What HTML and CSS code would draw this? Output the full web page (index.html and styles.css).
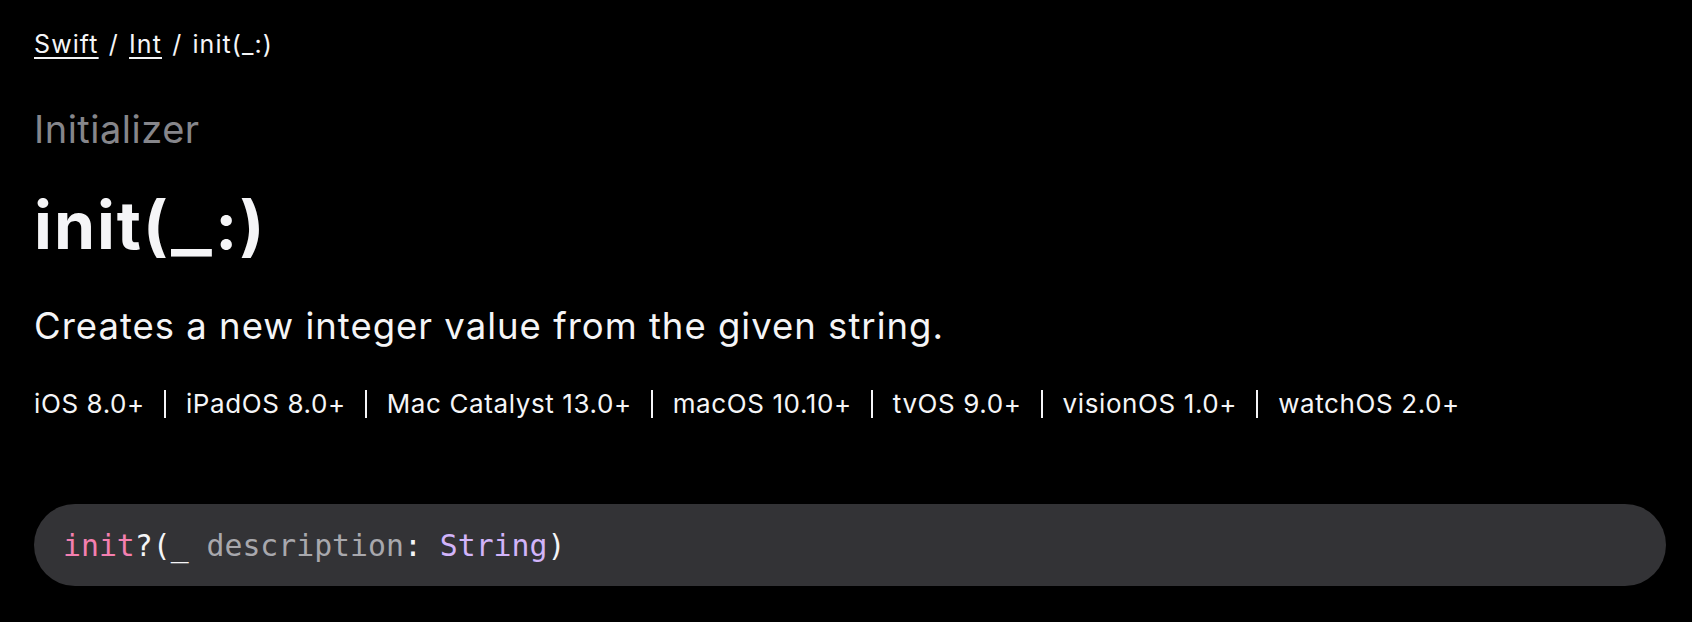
FILE: index.html
```html
<!DOCTYPE html>
<html lang="en">
<head>
<meta charset="utf-8">
<title>init(_:) | Apple Developer Documentation</title>
<link rel="stylesheet" href="styles.css">
</head>
<body>
<main class="page">
  <nav class="breadcrumb">
    <a class="crumb-link" href="#">Swift</a>
    <span class="crumb-sep">/</span>
    <a class="crumb-link" href="#">Int</a>
    <span class="crumb-sep">/</span>
    <span class="crumb-current">init(_:)</span>
  </nav>
  <div class="eyebrow">Initializer</div>
  <h1 class="title">init(<span class="title-under">_</span>:)</h1>
  <p class="abstract">Creates a new integer value from the given string.</p>
  <ul class="platforms">
    <li class="platform">iOS 8.0+</li>
    <li class="platform">iPadOS 8.0+</li>
    <li class="platform">Mac Catalyst 13.0+</li>
    <li class="platform">macOS 10.10+</li>
    <li class="platform">tvOS 9.0+</li>
    <li class="platform">visionOS 1.0+</li>
    <li class="platform">watchOS 2.0+</li>
  </ul>
  <div class="declaration">
    <code class="decl-code"><span class="kw">init</span>?(_ <span class="param">description</span>: <span class="type">String</span>)</code>
  </div>
</main>
</body>
</html>
```
FILE: styles.css
```css
html, body {
  margin: 0;
  padding: 0;
  background: #000;
}
body {
  color: #f5f5f7;
  font-family: Inter, "Noto Sans", "Liberation Sans", sans-serif;
}
.page {
  padding: 29px 26px 36px 34px;
}
.breadcrumb {
  font-size: 25px;
  line-height: 1.2;
  letter-spacing: 1.1px;
  color: #f5f5f7;
}
.crumb-link {
  color: #f5f5f7;
  text-decoration: underline;
  text-underline-offset: 4px;
  text-decoration-thickness: 1.5px;
}
.crumb-sep {
  margin: 0 2px;
}
.eyebrow {
  margin-top: 48px;
  font-size: 38px;
  line-height: 1.2;
  letter-spacing: 0.5px;
  color: #86868b;
}
.title {
  margin: 36px 0 0;
  font-size: 66px;
  line-height: 1.1;
  font-weight: 700;
  letter-spacing: 2px;
}
.title-under {
  display: inline-block;
  transform: scaleX(1.3);
  margin: 0 6px;
}
.abstract {
  margin: 44px 0 0;
  font-size: 36.5px;
  line-height: 1.2;
  letter-spacing: 1px;
}
.platforms {
  list-style: none;
  margin: 37px 0 0;
  padding: 0;
  display: flex;
  align-items: center;
  font-size: 26px;
  line-height: 36px;
  letter-spacing: 0.6px;
}
.platform + .platform::before {
  content: "";
  display: inline-block;
  width: 2px;
  height: 28px;
  background: #f5f5f7;
  margin: 0 20px 0 19px;
  vertical-align: -5px;
}
.declaration {
  margin-top: 82.5px;
  height: 82px;
  border-radius: 41px;
  background: #333336;
  padding-left: 29px;
  display: flex;
  align-items: center;
}
.decl-code {
  font-family: "DejaVu Sans Mono", "Liberation Mono", monospace;
  font-size: 29.8px;
  line-height: 82px;
  color: #f5f5f7;
  position: relative;
  top: 1px;
}
.kw { color: #f47fb0; }
.param { color: #a8a8ad; }
.type { color: #d2b4fa; }
```
